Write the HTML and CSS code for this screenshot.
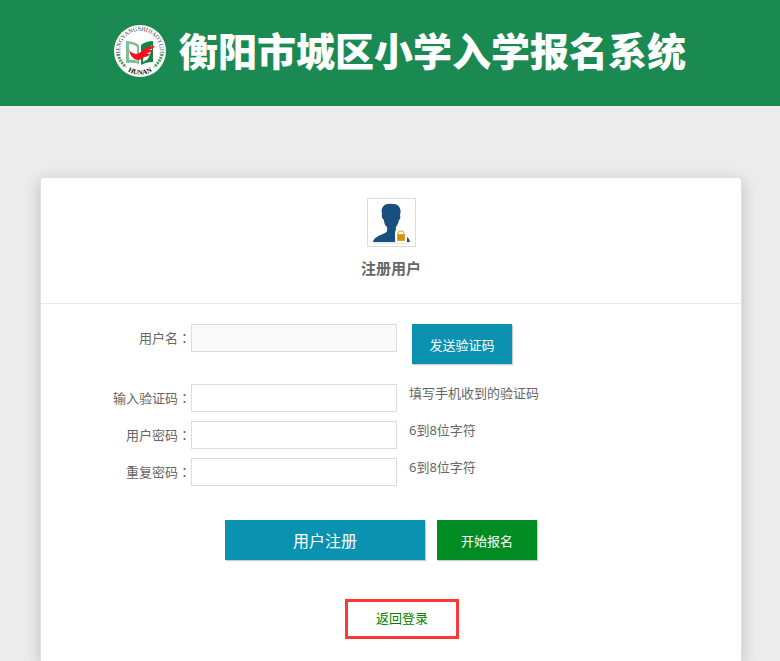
FILE: index.html
```html
<!DOCTYPE html>
<html lang="zh-CN">

<head>
    <meta charset="UTF-8">
    <meta name="viewport" content="width=device-width, initial-scale=1.0">
    <title>注册用户</title>
    <link rel="stylesheet" href="styles.css">
</head>

<body>
    <header class="header">
        <svg class="logo" viewBox="0 0 52 52" aria-hidden="true">
            <defs>
                <path id="arc_top" d="M7 32 A20 20 0 1 1 45 32" />
                <path id="arc_bottom" d="M8 41 A23 23 0 0 0 44 41" />
            </defs>
            <circle cx="26" cy="26" r="26" fill="#fff" />
            <text class="logo_top"><textPath href="#arc_top" startOffset="50%">HENGYANGSHIJIAOYUJU</textPath></text>
            <text class="logo_bottom"><textPath href="#arc_bottom" startOffset="50%">HUNAN</textPath></text>
            <!-- leaves on both sides -->
            <path d="M4 29 Q6 37 12 42" fill="none" stroke="#4f9a55" stroke-width="3" stroke-dasharray="2 1" />
            <path d="M48 29 Q46 37 40 42" fill="none" stroke="#4f9a55" stroke-width="3" stroke-dasharray="2 1" />
            <!-- open book -->
            <path d="M12 16 Q20 16 25 20 V39 Q20 37 12 38 Z" fill="#7cc09a" />
            <path d="M15 19 Q20 19 23 22 V36 Q20 34 15 35 Z" fill="#fff" />
            <path d="M27 20 Q32 16 39 16 V37 Q32 37 27 40 Z" fill="#168345" />
            <path d="M30 26 Q35 25 38 20 V24 L34 34 L29 37 Z" fill="#fff" />
            <!-- red bird -->
            <path d="M15 24 Q16 28 22 29 Q25 29 29 25 Q33 21 41 21 Q39 24 34 25 L39 25 Q37 28 32 28 L36 29 Q34 32 30 32 Q28 35 23 35 Q16 33 15 24 Z" fill="#f3121b" />
        </svg>
        <h1 class="title">衡阳市城区小学入学报名系统</h1>
    </header>

    <main class="card">
        <div class="card_head">
            <div class="avatar">
                <svg viewBox="0 0 47 47" aria-hidden="true">
                    <path d="M5 43 C6 38 11 37 17 34 Q20 33 19 28 Q16 26 16 21 Q13 19 14 15 C12 7 18 4 24 5 C31 4 34 10 32 16 Q33 20 31 21 Q30 26 28 28 Q27 33 31 35 L39 38 Q42 40 42 43 Z" fill="#194f80" />
                    <path d="M5 44 H41" stroke="#dcdcdc" stroke-width="1" />
                    <rect x="27" y="31" width="12" height="13" rx="2" fill="#fff" />
                    <path d="M30 37 V34 Q30 32 33 32 Q36 32 36 34 V37" fill="none" stroke="#dfa02b" stroke-width="1" />
                    <rect x="29" y="35" width="8" height="7" rx="1" fill="#e5a020" />
                    <path d="M31 36 V41 M33 36 V41 M35 36 V41" stroke="#c48316" stroke-width="1" />
                </svg>
            </div>
            <h2 class="card_title">注册用户</h2>
        </div>

        <form class="register_form" id="register_form">
            <div class="form_row form_row_user">
                <label class="form_label" for="userName">用户名<span class="colon" lang="zh-TW">：</span></label>
                <input class="form_input" type="text" id="userName" disabled>
                <button class="btn btn_code" type="button">发送验证码</button>
            </div>
            <div class="form_row">
                <label class="form_label" for="code">输入验证码<span class="colon" lang="zh-TW">：</span></label>
                <input class="form_input" type="text" id="code">
                <span class="form_hint">填写手机收到的验证码</span>
            </div>
            <div class="form_row">
                <label class="form_label" for="password">用户密码<span class="colon" lang="zh-TW">：</span></label>
                <input class="form_input" type="password" id="password">
                <span class="form_hint">6到8位字符</span>
            </div>
            <div class="form_row">
                <label class="form_label" for="c_password">重复密码<span class="colon" lang="zh-TW">：</span></label>
                <input class="form_input" type="password" id="c_password">
                <span class="form_hint">6到8位字符</span>
            </div>

            <div class="actions">
                <button class="btn btn_register" type="submit">用户注册</button>
                <button class="btn btn_start" type="button">开始报名</button>
            </div>
            <div class="back">
                <a class="back_link" href="#">返回登录</a>
            </div>
        </form>
    </main>
</body>

</html>
```

FILE: styles.css
```css
* {
    box-sizing: border-box;
}

body {
    display: flex;
    flex-direction: column;
    min-height: 100vh;
    margin: 0;
    background-color: #ececec;
    color: #666;
    font-family: "Noto Sans", "Noto Sans CJK SC", sans-serif;
    font-size: 13px;
    line-height: 18px;
}

.header {
    display: flex;
    justify-content: center;
    align-items: center;
    gap: 13px;
    height: 106px;
    padding: 0 0 4px 20px;
    background-color: #1b8a52;
}

.logo {
    width: 52px;
    height: 52px;
}

.logo_top {
    fill: #333;
    font-family: "Liberation Serif", serif;
    font-size: 6px;
    text-anchor: middle;
}

.logo_bottom {
    fill: #111;
    font-family: "Liberation Serif", serif;
    font-size: 7px;
    font-weight: bold;
    text-anchor: middle;
}

.title {
    margin: 0;
    padding-bottom: 4px;
    color: #fff;
    font-family: "Noto Sans CJK SC", sans-serif;
    font-size: 39px;
    font-weight: 900;
    line-height: 52px;
}

.card {
    flex: 1;
    margin: 71px 38px 0 40px;
    border: 1px solid #e0e0e0;
    border-bottom: none;
    border-radius: 4px 4px 0 0;
    background-color: #fff;
    box-shadow: 0 4px 16px rgba(0, 0, 0, 0.2);
}

.card_head {
    display: flex;
    flex-direction: column;
    align-items: center;
    height: 126px;
    padding-top: 20px;
    border-bottom: 1px solid #e8e8e8;
}

.avatar {
    width: 49px;
    height: 49px;
    border: 1px solid #ddd;
}

.avatar svg {
    display: block;
}

.card_title {
    margin: 11px 0 0;
    font-family: "Noto Sans CJK SC", sans-serif;
    font-size: 15px;
    font-weight: bold;
    line-height: 20px;
}

.register_form {
    padding: 20px 0;
}

.form_row {
    display: grid;
    grid-template-columns: 150px 206px 1fr;
    align-items: start;
    height: 37px;
}

.form_row_user {
    height: 60px;
}

.form_label {
    line-height: 28px;
    text-align: right;
}

.colon {
    font-family: "Noto Sans CJK TC", sans-serif;
}

.form_input {
    width: 100%;
    height: 28px;
    padding: 0 8px;
    border: 1px solid #ddd;
    background-color: #fff;
    color: #666;
    font: inherit;
}

.form_input:disabled {
    background-color: #fafafa;
}

.form_hint {
    padding-left: 12px;
}

.btn {
    height: 40px;
    padding: 0;
    border: none;
    color: #fff;
    font-family: inherit;
    font-size: 13px;
    box-shadow: 1px 1px 1px rgba(0, 0, 0, 0.2);
    cursor: pointer;
}

.btn_code {
    width: 100px;
    margin-left: 15px;
    background-color: #0b92b1;
}

.actions {
    display: flex;
    gap: 12px;
    margin-top: 25px;
    padding-left: 184px;
}

.btn_register {
    width: 200px;
    background-color: #0b92b1;
    font-size: 16px;
}

.btn_start {
    width: 100px;
    background-color: #008c23;
}

.back {
    display: flex;
    justify-content: center;
    margin-top: 39px;
    padding-left: 22px;
}

.back_link {
    width: 114px;
    padding-bottom: 2px;
    border: 3px solid #fb3838;
    color: #008000;
    line-height: 32px;
    text-align: center;
    text-decoration: none;
}
```
